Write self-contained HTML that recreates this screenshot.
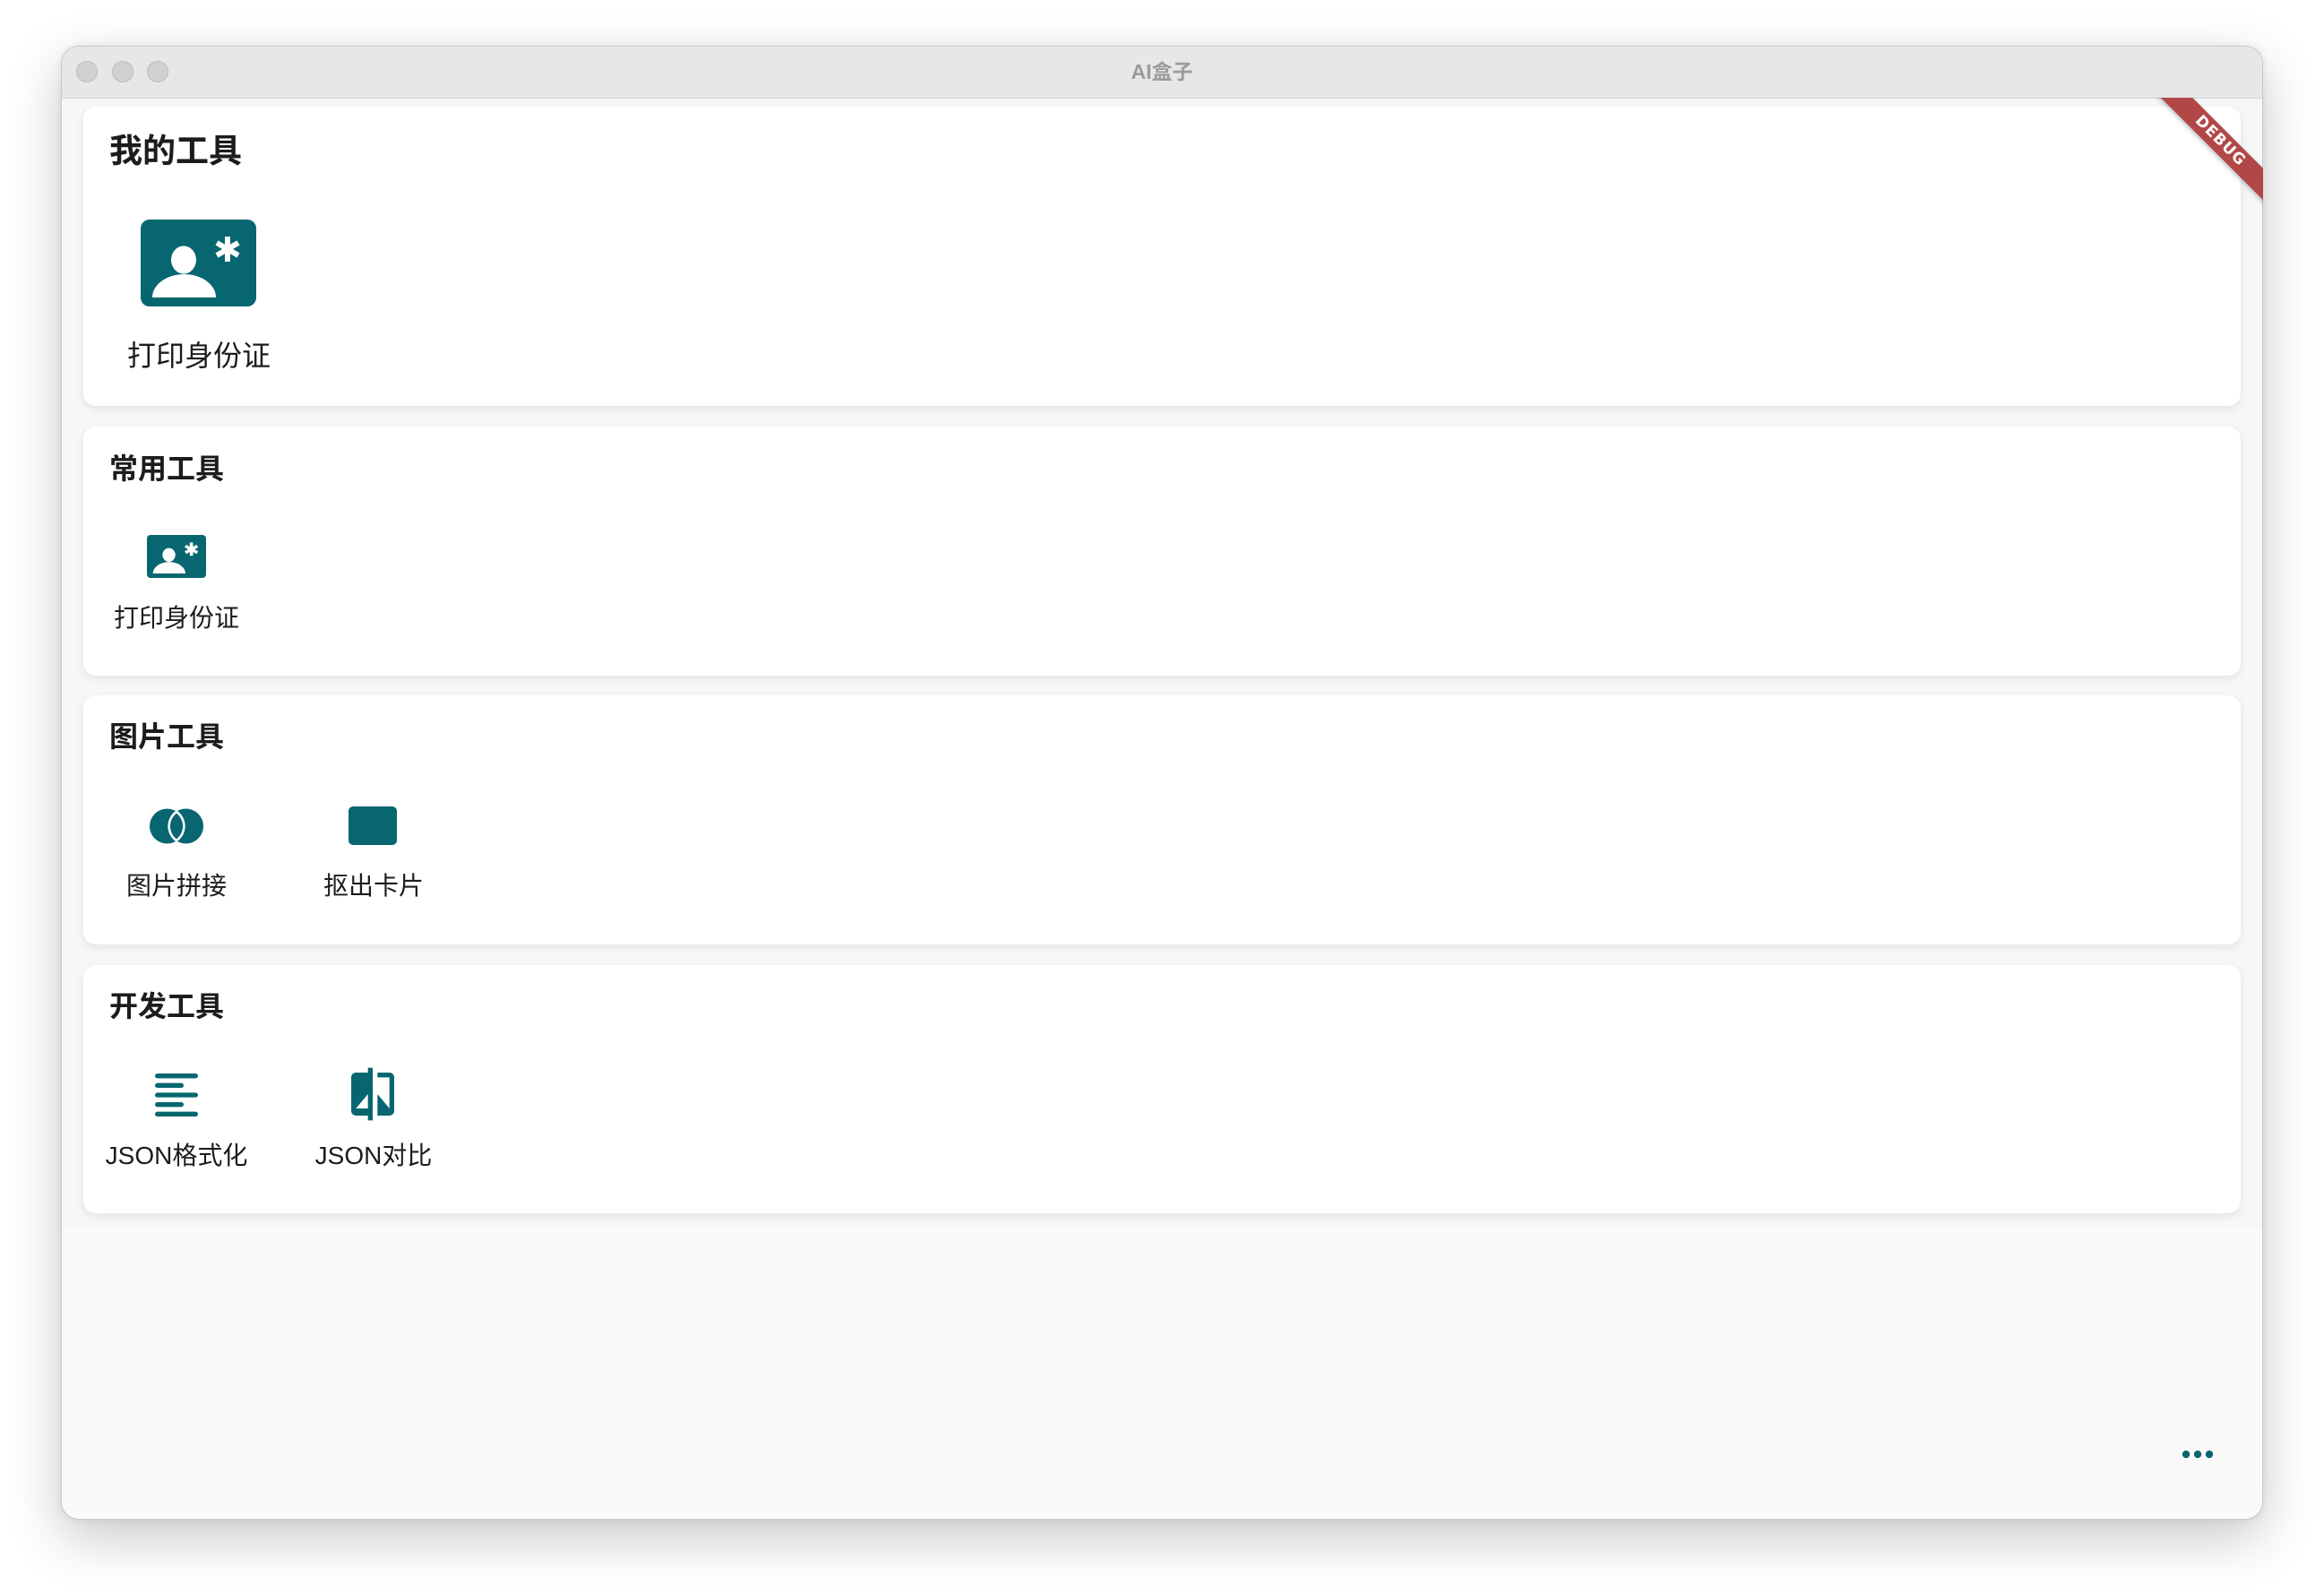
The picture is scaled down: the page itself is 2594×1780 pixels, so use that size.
<!DOCTYPE html>
<html><head><meta charset="utf-8"><style>
*{margin:0;padding:0;box-sizing:border-box}
body{width:2594px;height:1780px;background:#fff;position:relative;overflow:hidden;font-family:"Liberation Sans","Noto Sans CJK SC",sans-serif;color:#1c1c1c}
.win{position:absolute;left:68px;top:51px;width:2458px;height:1645px;border-radius:20px;background:#fafafa;border:1px solid #c9c9c9;box-shadow:0 20px 60px rgba(0,0,0,.22),0 0 8px rgba(0,0,0,.08);overflow:hidden}
.tb{position:absolute;left:0;top:0;width:100%;height:58px;background:#e6e7e7;border-bottom:1px solid #d2d2d2}
.dot{position:absolute;top:16px;width:24px;height:24px;border-radius:50%;background:#d0d0d0;border:1px solid #bdbdbd}
.ttl{position:absolute;left:0;width:100%;top:9px;text-align:center;font-size:23px;font-weight:bold;color:#9b9b9b}
.content{position:absolute;left:0;top:58px;width:100%;height:1260px;background:#f6f7f9}
.card{position:absolute;left:93px;width:2408px;background:#fff;border-radius:14px;box-shadow:0 3px 10px rgba(0,0,0,.09)}
.t{position:absolute;white-space:nowrap;line-height:1}
.c{transform:translateX(-50%)}
svg{position:absolute}
</style></head><body>
<div class="win">
 <div class="content"></div>
 <div class="tb">
  <div class="dot" style="left:16px"></div>
  <div class="dot" style="left:56px"></div>
  <div class="dot" style="left:95px"></div>
  <div class="ttl">AI盒子</div>
 </div>
</div>

<div class="card" style="top:119px;height:334px"></div>
<div class="card" style="top:476px;height:278px"></div>
<div class="card" style="top:776px;height:278px"></div>
<div class="card" style="top:1077px;height:277px"></div>

<div class="t" style="left:122px;top:150px;font-size:37px;font-weight:bold">我的工具</div>
<svg style="left:157px;top:245px" width="129" height="97" viewBox="0 0 129 97">
 <rect width="129" height="97" rx="10" fill="#07666f"/>
 <ellipse cx="48" cy="45" rx="14" ry="15.5" fill="#fff"/>
 <path d="M13 87 A35.5 26 0 0 1 84 87 Z" fill="#fff"/>
 <g stroke="#fff" stroke-width="6"><line x1="97" y1="19" x2="97" y2="47"/><line x1="85" y1="26" x2="109" y2="40"/><line x1="85" y1="40" x2="109" y2="26"/></g>
</svg>
<div class="t c" style="left:222px;top:381px;font-size:32px">打印身份证</div>

<div class="t" style="left:122px;top:507px;font-size:32px;font-weight:bold">常用工具</div>
<svg style="left:164px;top:597px" width="66" height="48" viewBox="0 0 129 97" preserveAspectRatio="none">
 <rect width="129" height="97" rx="8" fill="#07666f"/>
 <ellipse cx="48" cy="45" rx="14" ry="15.5" fill="#fff"/>
 <path d="M13 87 A35.5 26 0 0 1 84 87 Z" fill="#fff"/>
 <g stroke="#fff" stroke-width="7"><line x1="97" y1="17" x2="97" y2="47"/><line x1="84" y1="25" x2="110" y2="40"/><line x1="84" y1="40" x2="110" y2="25"/></g>
</svg>
<div class="t c" style="left:197px;top:676px;font-size:28px">打印身份证</div>

<div class="t" style="left:122px;top:806px;font-size:32px;font-weight:bold">图片工具</div>
<svg style="left:167px;top:902px" width="60" height="40" viewBox="0 0 60 40">
 <circle cx="19.5" cy="20" r="19.5" fill="#07666f"/><circle cx="40.5" cy="20" r="19.5" fill="#07666f"/>
 <path d="M30 4 A19.5 19.5 0 0 1 30 36 A19.5 19.5 0 0 1 30 4 Z" fill="#07666f" stroke="#fff" stroke-width="2.6"/>
</svg>
<div class="t c" style="left:197px;top:975px;font-size:28px">图片拼接</div>
<svg style="left:389px;top:900px" width="54" height="43"><rect width="54" height="43" rx="5" fill="#07666f"/></svg>
<div class="t c" style="left:417px;top:975px;font-size:28px">抠出卡片</div>

<div class="t" style="left:122px;top:1107px;font-size:32px;font-weight:bold">开发工具</div>
<svg style="left:165px;top:1190px" width="64" height="64" viewBox="0 0 24 24" fill="#07666f">
 <rect x="3" y="3" width="18" height="2" rx="1"/><rect x="3" y="7" width="12" height="2" rx="1"/><rect x="3" y="11" width="18" height="2" rx="1"/><rect x="3" y="15" width="12" height="2" rx="1"/><rect x="3" y="19" width="18" height="2" rx="1"/>
</svg>
<div class="t c" style="left:197px;top:1276px;font-size:28px">JSON格式化</div>
<svg style="left:384px;top:1189px" width="64" height="64" viewBox="0 0 24 24" fill="#07666f">
 <path d="M10 3H5c-1.11 0-2 .89-2 2v14c0 1.1.89 2 2 2h5v2h2V1h-2v2zm0 15H5l5-6v6zm9-15h-5v2h5v13l-5-6v9h5c1.1 0 2-.9 2-2V5c0-1.1-.9-2-2-2z"/>
</svg>
<div class="t c" style="left:417px;top:1276px;font-size:28px">JSON对比</div>

<svg style="left:2435px;top:1616px" width="36" height="14"><circle cx="5" cy="7" r="4.2" fill="#07666f"/><circle cx="18" cy="7" r="4.2" fill="#07666f"/><circle cx="31" cy="7" r="4.2" fill="#07666f"/></svg>

<div style="position:absolute;left:2326px;top:109px;width:200px;height:200px;overflow:hidden">
 <div style="position:absolute;left:52px;top:36px;width:200px;height:25px;background:#b14747;color:#fff;font-weight:bold;font-size:17px;line-height:25px;text-align:center;letter-spacing:1px;transform:rotate(45deg);box-shadow:0 2px 5px rgba(0,0,0,.25);font-family:'DejaVu Sans',sans-serif">DEBUG</div>
</div>
</body></html>
